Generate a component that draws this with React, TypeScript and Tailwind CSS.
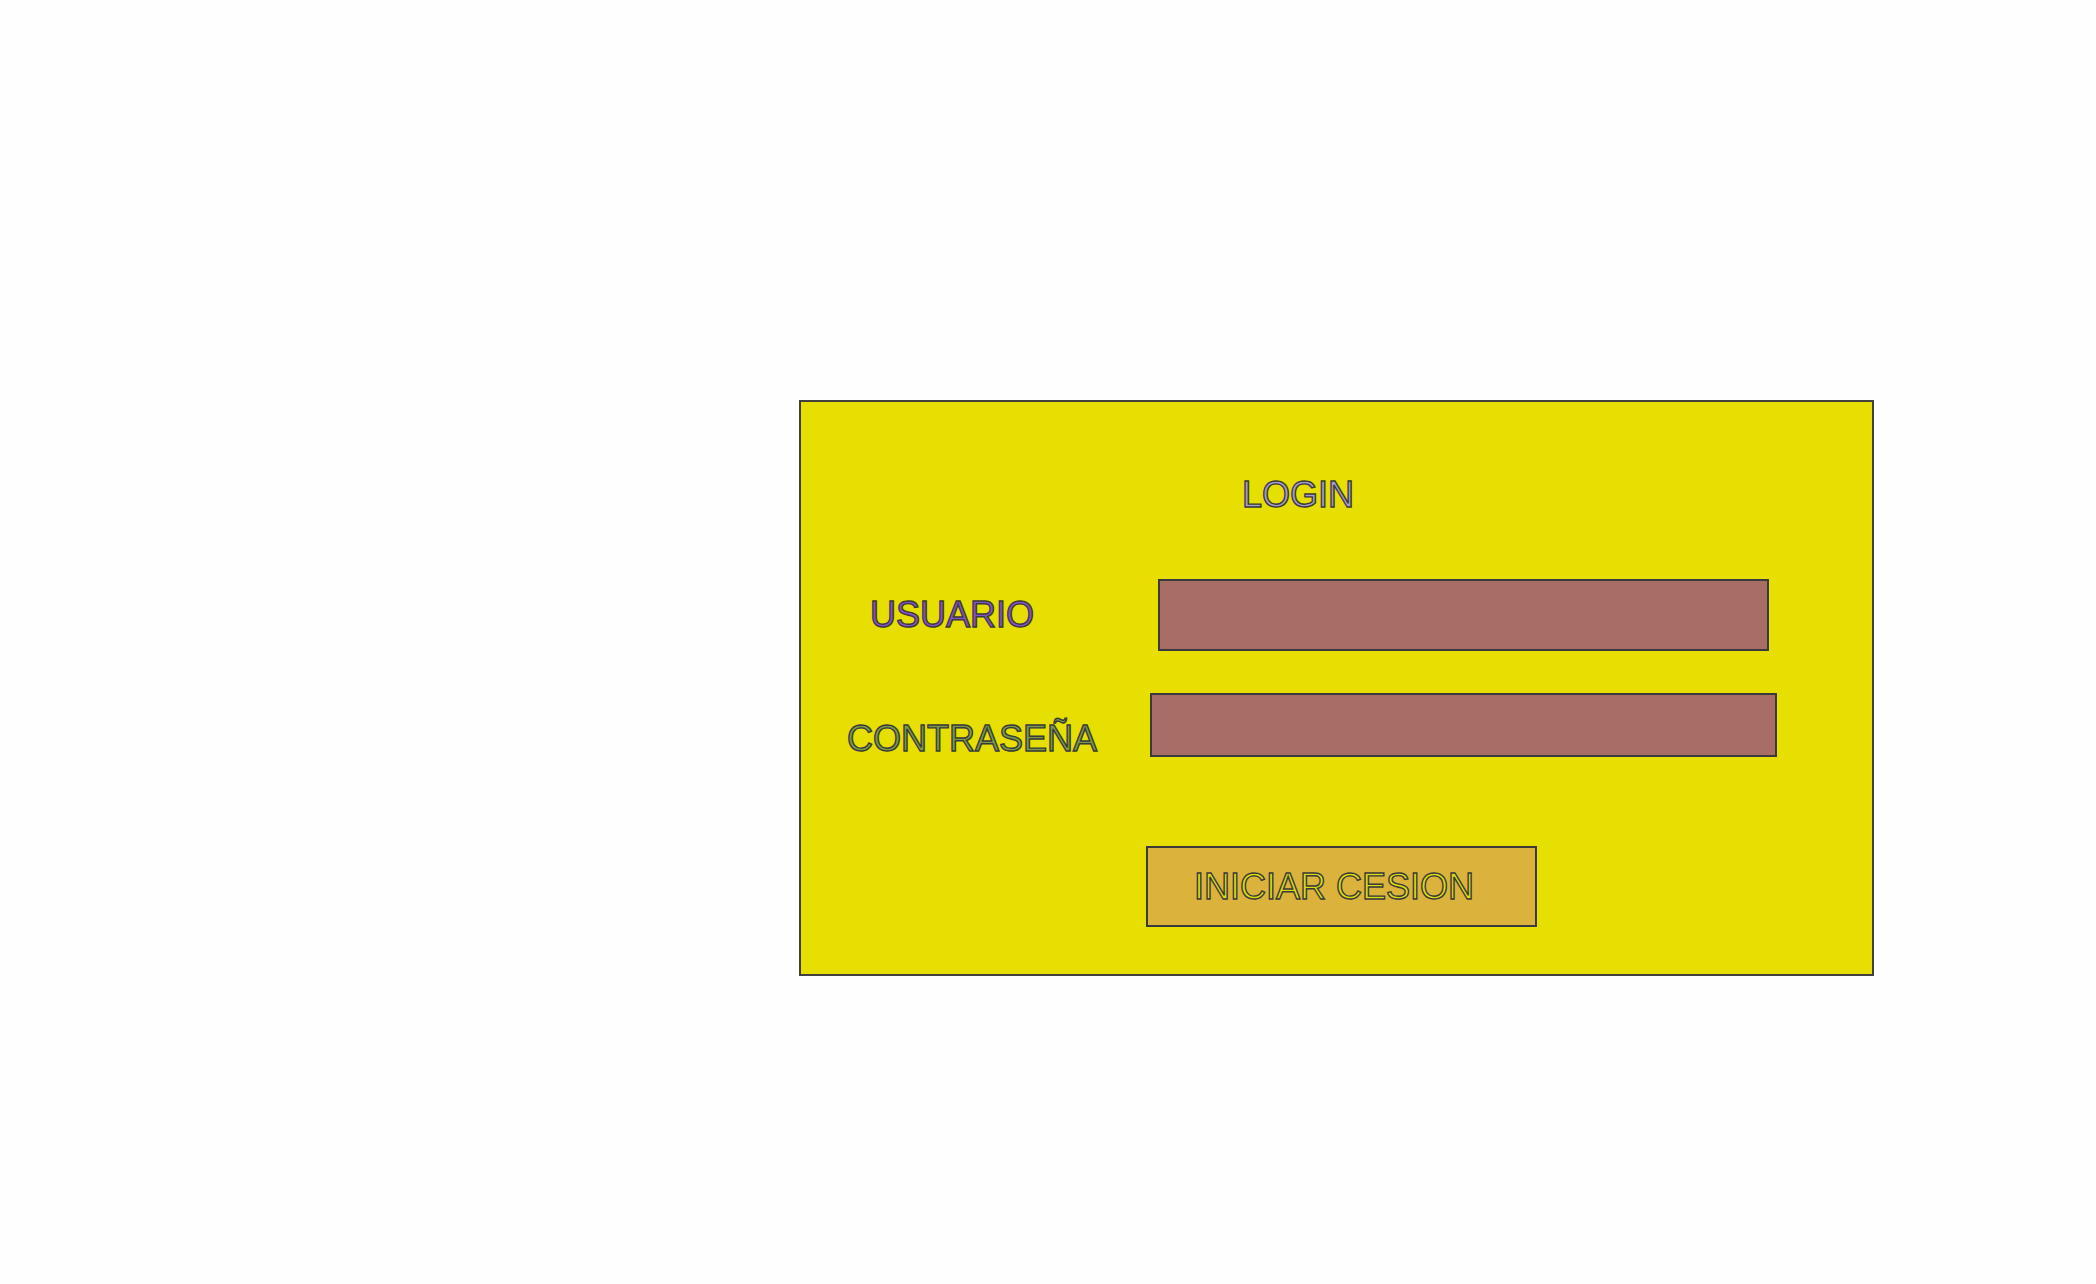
import { useState } from "react";

function App() {
  const [usuario, setUsuario] = useState("");
  const [clave, setClave] = useState("");

  const label = "font-['Liberation_Sans',Arial,sans-serif] text-[36px] leading-none [-webkit-text-stroke:1.4px_#3a3a3a]";

  return (
    <div className="min-h-screen bg-[#fefefe] pt-[400px] pl-[799px]">
      <div className="w-[1075px] h-[576px] bg-[#e6df00] border-2 border-[#404040] flex flex-col">
        <h1 className={`${label} mt-[75px] ml-[441px] text-[#a99ad0]`}>LOGIN</h1>

        <div className="flex items-start mt-[66px]">
          <span className={`${label} ml-[69px] w-[288px] mt-[18px] text-[#8a4fd0]`}>USUARIO</span>
          <input
            className="w-[611px] h-[72px] bg-[#a86e66] border-2 border-[#3a3a3a] outline-none px-3"
            type="text"
            value={usuario}
            onChange={(e) => setUsuario(e.target.value)}
          />
        </div>

        <div className="flex items-start mt-[42px]">
          <span className={`${label} ml-[46px] w-[303px] mt-[28px] text-[#7a9a48]`}>CONTRASEÑA</span>
          <input
            className="w-[627px] h-[64px] bg-[#a86e66] border-2 border-[#3a3a3a] outline-none px-3"
            type="password"
            value={clave}
            onChange={(e) => setClave(e.target.value)}
          />
        </div>

        <button className="mt-[89px] ml-[345px] w-[391px] h-[81px] bg-[#dbb33c] border-2 border-[#3a3a3a] flex items-start pl-[46px] pt-[21px]">
          <span className={`${label} text-[#dcdc10]`}>INICIAR CESION</span>
        </button>
      </div>
    </div>
  );
}

export default App;
